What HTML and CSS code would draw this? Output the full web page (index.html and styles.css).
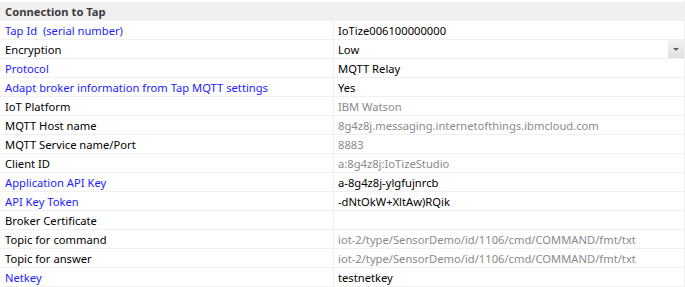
FILE: index.html
```html
<!DOCTYPE html>
<html lang="en">
<head>
    <meta charset="UTF-8">
    <title>Connection to Tap</title>
    <link rel="stylesheet" href="styles.css">
</head>
<body>
    <div class="grid">
        <div class="row category">
            <div class="name">Connection to Tap</div>
        </div>
        <div class="row">
            <div class="name link">Tap Id&nbsp; (serial number)</div>
            <div class="value">IoTize006100000000</div>
        </div>
        <div class="row">
            <div class="name">Encryption</div>
            <div class="value">Low<span class="drop"><span class="arrow"></span></span></div>
        </div>
        <div class="row">
            <div class="name link">Protocol</div>
            <div class="value">MQTT Relay</div>
        </div>
        <div class="row">
            <div class="name link">Adapt broker information from Tap MQTT settings</div>
            <div class="value">Yes</div>
        </div>
        <div class="row">
            <div class="name">IoT Platform</div>
            <div class="value muted">IBM Watson</div>
        </div>
        <div class="row">
            <div class="name">MQTT Host name</div>
            <div class="value muted">8g4z8j.messaging.internetofthings.ibmcloud.com</div>
        </div>
        <div class="row">
            <div class="name">MQTT Service name/Port</div>
            <div class="value muted">8883</div>
        </div>
        <div class="row">
            <div class="name">Client ID</div>
            <div class="value muted">a:8g4z8j:IoTizeStudio</div>
        </div>
        <div class="row">
            <div class="name link">Application API Key</div>
            <div class="value">a-8g4z8j-ylgfujnrcb</div>
        </div>
        <div class="row">
            <div class="name link">API Key Token</div>
            <div class="value">-dNtOkW+XltAw)RQik</div>
        </div>
        <div class="row">
            <div class="name">Broker Certificate</div>
            <div class="value"></div>
        </div>
        <div class="row">
            <div class="name">Topic for command</div>
            <div class="value muted">iot-2/type/SensorDemo/id/1106/cmd/COMMAND/fmt/txt</div>
        </div>
        <div class="row">
            <div class="name">Topic for answer</div>
            <div class="value muted">iot-2/type/SensorDemo/id/1106/cmd/COMMAND/fmt/txt</div>
        </div>
        <div class="row">
            <div class="name link">Netkey</div>
            <div class="value">testnetkey</div>
        </div>
    </div>
</body>
</html>
```

FILE: styles.css
```css
body {
    margin: 0;
    background: #fff;
    font-family: 'Noto Sans', 'Open Sans', sans-serif;
    font-size: 11.2px;
    color: #000;
}
.grid {
    padding-top: 2px;
    border-right: 1px solid #f0f0f0;
}
.row {
    display: flex;
    height: 18px;
    line-height: 19px;
    border-bottom: 1px solid #f0f0f0;
}
.name {
    width: 328px;
    padding-left: 5px;
    border-right: 1px solid #f0f0f0;
    white-space: nowrap;
}
.value {
    flex: 1;
    position: relative;
    padding-left: 4px;
    white-space: nowrap;
}
.link {
    color: #1c1cff;
}
.muted {
    color: #8a8a8a;
}
.category {
    background: #f0f0f0;
    height: 19px;
    line-height: 19px;
    border-bottom: none;
}
.category .name {
    font-weight: bold;
    color: #3c3c3c;
    border-right: none;
}
.drop {
    position: absolute;
    top: 0;
    right: 0;
    width: 16px;
    height: 18px;
    background: linear-gradient(#f2f2f2, #e0e0e0);
    display: flex;
    align-items: center;
    justify-content: center;
}
.arrow {
    width: 0;
    height: 0;
    border-left: 3px solid transparent;
    border-right: 3px solid transparent;
    border-top: 3px solid #606060;
}
```
